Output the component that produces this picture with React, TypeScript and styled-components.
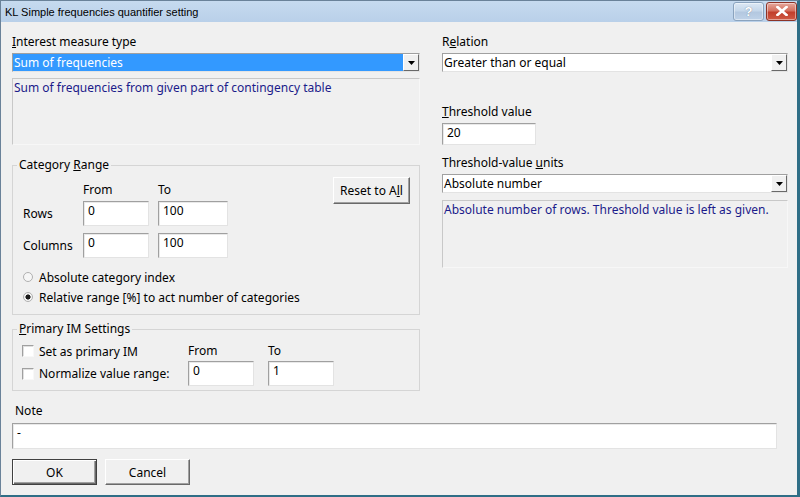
import React from 'react';
import styled, { createGlobalStyle } from 'styled-components';

const Global = createGlobalStyle`
  html, body { margin: 0; padding: 0; background: #f0f0f0; }
  body { font-family: "Noto Sans", "Liberation Sans", Arial, sans-serif; font-size: 12px; color: #000; }
  * { box-sizing: border-box; }
`;

const Window = styled.div`
  width: 800px;
  height: 497px;
  border-left: 1px solid #6a8299;
  border-top: 1px solid #6a8299;
  border-right: 3px solid #2f6e86;
  border-bottom: 2px solid #2f6e86;
  background: #f0f0f0;
  display: flex;
  flex-direction: column;
  overflow: hidden;
`;

const TitleBar = styled.div`
  height: 21px;
  flex: none;
  display: flex;
  align-items: center;
  padding-left: 4px;
  background: linear-gradient(#c6daef, #b9d0e9);
`;

const TitleText = styled.div`
  font-family: "Liberation Sans", Arial, sans-serif;
  font-size: 11px;
  color: #000;
  flex: 1;
`;

const CaptionBtn = styled.div<{ $close?: boolean }>`
  width: 31px;
  height: 19px;
  margin-top: -1px;
  margin-left: 2px;
  border: 1px solid ${p => (p.$close ? '#8c3327' : '#8aa3be')};
  border-radius: 3px;
  display: flex;
  align-items: center;
  justify-content: center;
  background: ${p =>
    p.$close
      ? 'linear-gradient(#e6a99d 0%, #d4705f 45%, #c13f2c 55%, #cf5a44 100%)'
      : 'linear-gradient(#dce8f4 0%, #c5d7ea 45%, #b3c8e0 55%, #bfd2e8 100%)'};
  box-shadow: inset 0 0 0 1px rgba(255, 255, 255, 0.45);
  color: #fff;
  font-family: "Liberation Sans", Arial, sans-serif;
  font-weight: bold;
  font-size: 13px;
  text-shadow: 0 0 1px #5a6f86;
`;

const Body = styled.div`
  flex: 1;
  padding: 0 0 0 11px;
  display: flex;
  flex-direction: column;
`;

const Columns = styled.div`
  display: grid;
  grid-template-columns: 408px 346px;
  column-gap: 22px;
  align-items: start;
`;

const Col = styled.div`
  display: flex;
  flex-direction: column;
`;

const Label = styled.div<{ $mt: number }>`
  line-height: 14px;
  height: 14px;
  margin-top: ${p => p.$mt}px;
  white-space: nowrap;
`;

const Combo = styled.div<{ $mt: number }>`
  height: 19px;
  margin-top: ${p => p.$mt}px;
  background: #fff;
  border: 1px solid;
  border-color: #a0a0a0 #e3e3e3 #e3e3e3 #a0a0a0;
  display: flex;
  align-items: stretch;
`;

const ComboText = styled.div<{ $selected?: boolean }>`
  flex: 1;
  padding-left: 1px;
  line-height: 17px;
  background: ${p => (p.$selected ? '#3399ff' : 'transparent')};
  color: ${p => (p.$selected ? '#fff' : '#000')};
`;

const DropBtn = styled.div`
  width: 16px;
  flex: none;
  background: #f0f0f0;
  border: 1px solid;
  border-color: #fff #696969 #696969 #fff;
  display: flex;
  align-items: center;
  justify-content: center;
`;

const Arrow = () => (
  <svg width="7" height="4" viewBox="0 0 7 4">
    <path d="M0 0H7L3.5 4Z" fill="#000" />
  </svg>
);

const DescBox = styled.div<{ $mt: number; $h: number }>`
  margin-top: ${p => p.$mt}px;
  height: ${p => p.$h}px;
  border: 1px solid;
  border-color: #c8c8c8 #f7f7f7 #f7f7f7 #c8c8c8;
  color: #1b1b8a;
  padding: 2px 0 0 1px;
  line-height: 14px;
`;

const Group = styled.div<{ $mt: number; $pt: number; $pb: number }>`
  position: relative;
  margin-top: ${p => p.$mt}px;
  border: 1px solid #d5d5d5;
  padding: ${p => p.$pt}px 9px ${p => p.$pb}px 10px;
`;

const GroupCaption = styled.div`
  position: absolute;
  top: -8px;
  left: 4px;
  padding: 0 2px;
  background: #f0f0f0;
  line-height: 14px;
`;

const RangeTop = styled.div`
  display: flex;
  align-items: flex-start;
`;

const RangeGrid = styled.div`
  margin-top: 6px;
  display: grid;
  grid-template-columns: 51px 66px 70px;
  grid-template-rows: 14px 25px 28px;
  column-gap: 9px;
  row-gap: 4px;
  align-items: end;
`;

const Cell = styled.div`
  line-height: 14px;
  white-space: nowrap;
`;

const RowLabel = styled.div`
  line-height: 25px;
  white-space: nowrap;
`;

const Field = styled.div<{ $w?: number; $h?: number }>`
  width: ${p => (p.$w ? `${p.$w}px` : '100%')};
  height: ${p => p.$h ?? 25}px;
  background: #fff;
  border: 1px solid;
  border-color: #a0a0a0 #e3e3e3 #e3e3e3 #a0a0a0;
  box-shadow: inset 1px 1px 0 #e9e9e9;
  padding: 2px 0 0 4px;
  line-height: 14px;
`;

const Button = styled.div<{ $w: number; $default?: boolean }>`
  width: ${p => p.$w}px;
  height: 26px;
  flex: none;
  background: #f0f0f0;
  border: 1px solid;
  border-color: ${p => (p.$default ? '#404040' : '#fff #696969 #696969 #fff')};
  box-shadow: ${p =>
    p.$default
      ? 'inset 1px 1px 0 #fff, inset -1px -1px 0 #696969, inset -2px -2px 0 #a0a0a0'
      : 'inset -1px -1px 0 #a0a0a0'};
  display: flex;
  align-items: center;
  justify-content: center;
  white-space: nowrap;
`;

const ResetButton = styled(Button)`
  margin-left: auto;
  height: 27px;
`;

const RadioList = styled.div`
  margin-top: 11px;
  display: flex;
  flex-direction: column;
  gap: 4px;
`;

const OptionRow = styled.div<{ $gap?: number }>`
  height: 16px;
  display: flex;
  align-items: center;
  gap: ${p => p.$gap ?? 6}px;
  white-space: nowrap;
`;

const RadioDot = styled.div<{ $on?: boolean }>`
  width: 10px;
  height: 10px;
  border-radius: 50%;
  border: 1px solid #b0b0b0;
  background: ${p => (p.$on ? 'radial-gradient(circle, #1a1a1a 0 2.3px, #f4f4f4 2.8px)' : '#f6f6f6')};
`;

const CheckBox = styled.div`
  width: 12px;
  height: 12px;
  margin-left: -1px;
  border: 1px solid;
  border-color: #a0a0a0 #f8f8f8 #f8f8f8 #a0a0a0;
  background: #fff;
  box-shadow: inset 1px 1px 0 #e0e0e0;
`;

const PrimaryGrid = styled.div`
  display: grid;
  grid-template-columns: 151px 66px 66px;
  grid-template-rows: 14px 25px;
  column-gap: 14px;
  row-gap: 3px;
  align-items: center;
`;

const Footer = styled.div`
  display: flex;
  flex-direction: column;
`;

const NoteLabel = styled(Label)`
  padding-left: 3px;
`;

const NoteField = styled(Field)`
  width: 765px;
  height: 26px;
  margin-top: 5px;
`;

const ButtonRow = styled.div`
  margin-top: 10px;
  display: flex;
  gap: 8px;
`;

export default function App() {
  return (
    <>
      <Global />
      <Window>
        <TitleBar>
          <TitleText>KL Simple frequencies quantifier setting</TitleText>
          <CaptionBtn>?</CaptionBtn>
          <CaptionBtn $close>
            <svg width="12" height="10" viewBox="0 0 12 10">
              <path d="M1.5 1L10.5 9M10.5 1L1.5 9" stroke="#fff" strokeWidth="2.6" strokeLinecap="square" />
            </svg>
          </CaptionBtn>
        </TitleBar>
        <Body>
          <Columns>
            <Col>
              <Label $mt={13}><u>I</u>nterest measure type</Label>
              <Combo $mt={4}>
                <ComboText $selected>Sum of frequencies</ComboText>
                <DropBtn><Arrow /></DropBtn>
              </Combo>
              <DescBox $mt={6} $h={67}>Sum of frequencies from given part of contingency table</DescBox>

              <Group $mt={20} $pt={11} $pb={9}>
                <GroupCaption>Category <u>R</u>ange</GroupCaption>
                <RangeTop>
                  <RangeGrid>
                    <Cell />
                    <Cell>From</Cell>
                    <Cell>To</Cell>
                    <RowLabel>Rows</RowLabel>
                    <Field>0</Field>
                    <Field>100</Field>
                    <RowLabel>Columns</RowLabel>
                    <Field>0</Field>
                    <Field>100</Field>
                  </RangeGrid>
                  <ResetButton $w={77}>Reset to A<u>l</u>l</ResetButton>
                </RangeTop>
                <RadioList>
                  <OptionRow><RadioDot />Absolute category index</OptionRow>
                  <OptionRow><RadioDot $on />Relative range [%] to act number of categories</OptionRow>
                </RadioList>
              </Group>

              <Group $mt={14} $pt={14} $pb={4}>
                <GroupCaption><u>P</u>rimary IM Settings</GroupCaption>
                <PrimaryGrid>
                  <OptionRow $gap={5}><CheckBox />Set as primary IM</OptionRow>
                  <Cell>From</Cell>
                  <Cell>To</Cell>
                  <OptionRow $gap={5}><CheckBox />Normalize value range:</OptionRow>
                  <Field>0</Field>
                  <Field>1</Field>
                </PrimaryGrid>
              </Group>
            </Col>

            <Col>
              <Label $mt={13}>R<u>e</u>lation</Label>
              <Combo $mt={4}>
                <ComboText>Greater than or equal</ComboText>
                <DropBtn><Arrow /></DropBtn>
              </Combo>
              <Label $mt={33}><u>T</u>hreshold value</Label>
              <Field $w={94} $h={22} style={{ marginTop: 4 }}>20</Field>
              <Label $mt={11}>Threshold-value <u>u</u>nits</Label>
              <Combo $mt={4}>
                <ComboText>Absolute number</ComboText>
                <DropBtn><Arrow /></DropBtn>
              </Combo>
              <DescBox $mt={7} $h={68}>Absolute number of rows. Threshold value is left as given.</DescBox>
            </Col>
          </Columns>

          <Footer>
            <NoteLabel $mt={13}>Note</NoteLabel>
            <NoteField>-</NoteField>
            <ButtonRow>
              <Button $w={85} $default>OK</Button>
              <Button $w={85}>Cancel</Button>
            </ButtonRow>
          </Footer>
        </Body>
      </Window>
    </>
  );
}
